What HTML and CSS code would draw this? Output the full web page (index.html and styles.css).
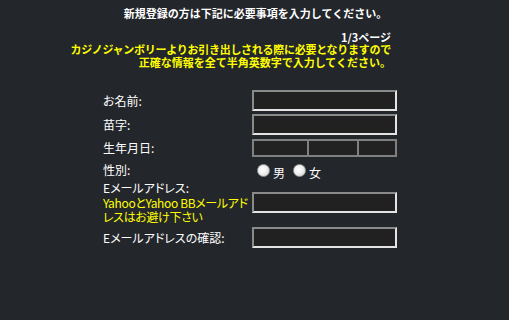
FILE: index.html
```html
<!DOCTYPE html>
<html lang="ja">
<head>
<meta charset="utf-8">
<link rel="stylesheet" href="styles.css">
</head>
<body>
<div class="intro">
  <div class="lead">新規登録の方は下記に必要事項を入力してください。</div>
  <div class="notes">
    <div class="blank">&nbsp;</div>
    <div class="page">1/3ページ</div>
    <div class="warn first">カジノジャンボリーよりお引き出しされる際に必要となりますので</div>
    <div class="warn">正確な情報を全て半角英数字で入力してください。</div>
  </div>
</div>
<form class="form">
  <div class="row r1"><span class="label">お名前:</span><span class="field"></span></div>
  <div class="row r2"><span class="label">苗字:</span><span class="field"></span></div>
  <div class="row r3"><span class="label">生年月日:</span>
    <span class="dob"><span class="sel s1"></span><span class="sel s2"></span><span class="sel s3"></span></span>
  </div>
  <div class="row r4"><span class="label">性別:</span>
    <span class="gender"><span class="radio"></span><span class="opt">男</span><span class="radio"></span><span class="opt">女</span></span>
  </div>
  <div class="row r5"><span class="label tall">Eメールアドレス:<br><span class="yellow">YahooとYahoo BBメールアドレスはお避け下さい</span></span><span class="field"></span></div>
  <div class="row r6"><span class="label">Eメールアドレスの確認:</span><span class="field"></span></div>
</form>
</body>
</html>
```
FILE: styles.css
```css
html, body {
  margin: 0;
  padding: 0;
  background: #23262b;
  width: 509px;
  height: 320px;
  overflow: hidden;
  font-family: "Noto Sans CJK JP", "Noto Sans", sans-serif;
  color: #ffffff;
}
.intro {
  padding-top: 7px;
  font-size: 11px;
  font-weight: bold;
  line-height: 12px;
}
.lead {
  text-align: center;
  padding-left: 2px;
}
.notes {
  text-align: right;
  padding-right: 118px;
}
.warn {
  color: #ffff00;
  line-height: 12.5px;
}
.first {
  letter-spacing: -0.27px;
}
.form {
  margin: 0;
  padding: 21px 0 0 103px;
  display: flex;
  flex-direction: column;
  font-size: 12px;
}
.row {
  display: grid;
  grid-template-columns: 149px 145px;
  align-items: center;
}
.r1 { height: 23px; }
.r2 { height: 25px; }
.r3 { height: 22px; }
.r4 { height: 22px; }
.r5 { height: 43px; }
.r6 { height: 27px; }
.label {
  line-height: 14px;
  font-feature-settings: "palt" 1;
}
.tall {
  line-height: 14.5px;
}
.yellow {
  color: #ffff00;
  letter-spacing: -0.35px;
}
.field {
  display: block;
  box-sizing: border-box;
  width: 145px;
  height: 21px;
  background: #212121;
  border: 2px solid;
  border-color: #8a8a8a #e4e4e4 #e4e4e4 #8a8a8a;
}
.dob {
  display: flex;
  height: 18px;
}
.sel {
  box-sizing: border-box;
  height: 18px;
  background: #222222;
  border: 2px solid #808080;
  border-right: none;
}
.s1 { width: 55px; }
.s2 { width: 50px; }
.s3 { width: 40px; border-right: 2px solid #808080; }
.gender {
  display: flex;
  align-items: center;
  padding-left: 5px;
}
.radio {
  display: inline-block;
  box-sizing: border-box;
  width: 13px;
  height: 13px;
  border-radius: 50%;
  border: 1px solid #9a9a9a;
  background: radial-gradient(circle at 40% 40%, #ffffff 0%, #f0f0f0 45%, #c8c8c8 100%);
}
.opt {
  margin: 4px 8px 0 3px;
  font-size: 12px;
}
```
